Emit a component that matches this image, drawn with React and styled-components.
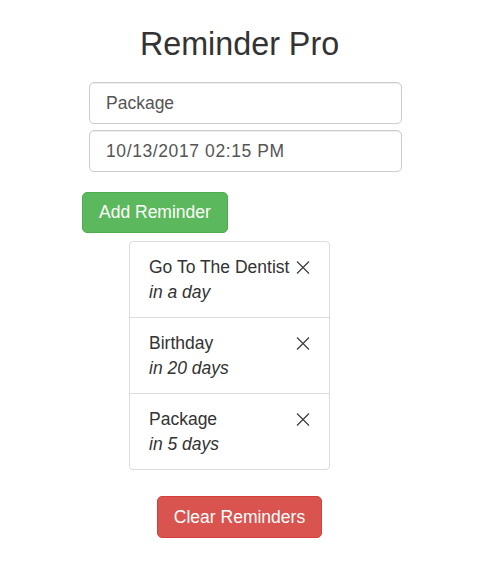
import React from 'react'
import styled, { createGlobalStyle } from 'styled-components'

const GlobalStyle = createGlobalStyle`
  html, body {
    margin: 0;
    padding: 0;
    background: #fff;
  }
  body {
    font-family: "Liberation Sans", Arial, Helvetica, sans-serif;
    color: #333;
  }
`

const Page = styled.div`
  width: 479px;
  padding-top: 27px;
  display: flex;
  flex-direction: column;
  align-items: flex-start;
`

const Title = styled.h1`
  align-self: stretch;
  margin: 0;
  font-size: 32.3px;
  font-weight: normal;
  line-height: 35px;
  text-align: center;
  color: #333;
`

const Form = styled.div`
  display: flex;
  flex-direction: column;
  gap: 6px;
  margin: 20px 0 0 89px;
  width: 313px;
`

const Input = styled.input`
  box-sizing: border-box;
  height: 42px;
  width: 100%;
  padding: 0 16px;
  font-family: inherit;
  font-size: 17.5px;
  letter-spacing: ${p => p.spacing || 0}px;
  color: #555;
  background: #fff;
  border: 1px solid #ccc;
  border-radius: 5px;
  box-shadow: inset 0 1px 1px rgba(0, 0, 0, 0.075);
  outline: none;
`

const Button = styled.button`
  box-sizing: border-box;
  height: ${p => p.h || 41}px;
  padding: 0 16px;
  font-family: inherit;
  font-size: 17.5px;
  color: #fff;
  background: ${p => (p.danger ? '#d9534f' : '#5cb85c')};
  border: 1px solid ${p => (p.danger ? '#d43f3a' : '#4cae4c')};
  border-radius: 5px;
  cursor: pointer;
`

const AddButton = styled(Button)`
  margin: 20px 0 0 82px;
`

const ClearButton = styled(Button)`
  align-self: center;
  margin-top: 26px;
`

const List = styled.ul`
  list-style: none;
  margin: 8px 0 0 129px;
  padding: 0;
  width: 201px;
`

const Item = styled.li`
  padding: 12.5px 19px;
  margin-bottom: -1px;
  border: 1px solid #ddd;
  font-size: 17.5px;
  line-height: 25px;
  color: #333;

  &:first-child {
    border-top-left-radius: 4px;
    border-top-right-radius: 4px;
  }
  &:last-child {
    margin-bottom: 0;
    border-bottom-left-radius: 4px;
    border-bottom-right-radius: 4px;
  }
`

const Remove = styled.span`
  float: right;
  display: flex;
  align-items: center;
  height: 25px;
  margin-left: 4px;
  cursor: pointer;
`

const Due = styled.div`
  font-style: italic;
`

const CloseIcon = () => (
  <svg width="14" height="13" viewBox="0 0 14 13">
    <path d="M1 0.5 L13 12.5 M13 0.5 L1 12.5" stroke="#3a3a3a" strokeWidth="1.15" fill="none" />
  </svg>
)

const reminders = [
  { text: 'Go To The Dentist', due: 'in a day' },
  { text: 'Birthday', due: 'in 20 days' },
  { text: 'Package', due: 'in 5 days' },
]

export default function App() {
  return (
    <Page>
      <GlobalStyle />
      <Title>Reminder Pro</Title>
      <Form>
        <Input type="text" defaultValue="Package" />
        <Input type="text" defaultValue="10/13/2017 02:15 PM" spacing={0.6} />
      </Form>
      <AddButton>Add Reminder</AddButton>
      <List>
        {reminders.map(r => (
          <Item key={r.text}>
            <Remove><CloseIcon /></Remove>
            <div>{r.text}</div>
            <Due>{r.due}</Due>
          </Item>
        ))}
      </List>
      <ClearButton danger h={42}>Clear Reminders</ClearButton>
    </Page>
  )
}
